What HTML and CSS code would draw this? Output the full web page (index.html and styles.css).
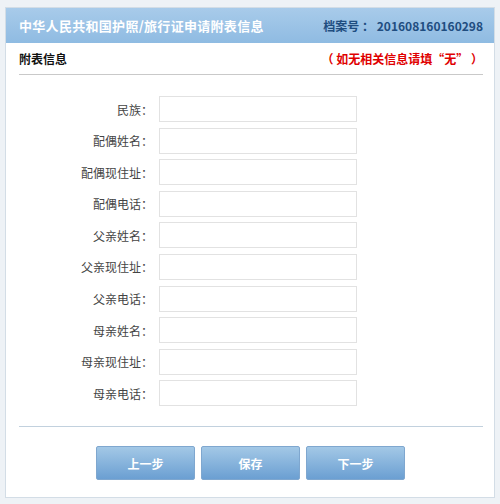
FILE: index.html
```html
<!DOCTYPE html>
<html lang="zh-CN">
<head>
  <meta charset="UTF-8" />
  <title>附表信息</title>
  <link rel="stylesheet" href="styles.css">
</head>
<body>
  <div class="panel">
    <div class="panel-head">
      <h1>中华人民共和国护照/旅行证申请附表信息</h1>
      <span class="file-no">档案号 ： 201608160160298</span>
    </div>

    <div class="panel-body">
      <div class="sub-head">
        <h2>附表信息</h2>
        <span class="note">（ 如无相关信息请填“无” ）</span>
      </div>

      <!-- 附表表单 -->
      <form class="form">
        <div class="row"><label>民族：</label><input type="text" /></div>
        <div class="row"><label>配偶姓名：</label><input type="text" /></div>
        <div class="row"><label>配偶现住址：</label><input type="text" /></div>
        <div class="row"><label>配偶电话：</label><input type="text" /></div>
        <div class="row"><label>父亲姓名：</label><input type="text" /></div>
        <div class="row"><label>父亲现住址：</label><input type="text" /></div>
        <div class="row"><label>父亲电话：</label><input type="text" /></div>
        <div class="row"><label>母亲姓名：</label><input type="text" /></div>
        <div class="row"><label>母亲现住址：</label><input type="text" /></div>
        <div class="row"><label>母亲电话：</label><input type="text" /></div>
      </form>

      <div class="actions">
        <button type="button">上一步</button>
        <button type="button">保存</button>
        <button type="button">下一步</button>
      </div>
    </div>
  </div>
</body>
</html>
```

FILE: styles.css
```css
* {
  margin: 0;
  padding: 0;
  box-sizing: border-box;
}

body {
  font-family: "Noto Sans CJK SC", "Liberation Sans", sans-serif;
  font-size: 12px;
  color: #333;
  background-color: #eef2f6;
  padding: 7px 5px 6px 5px;
}

.panel {
  background-color: #fff;
  border: 1px solid #d3dde6;
  height: 491px;
}

.panel-head {
  height: 35px;
  display: flex;
  align-items: center;
  justify-content: space-between;
  padding: 0 11px 0 13px;
  background: linear-gradient(#a8cbea, #8fbbe2);
}

.panel-head h1 {
  font-size: 13px;
  font-weight: bold;
  color: #fff;
  letter-spacing: 0.3px;
}

.file-no {
  font-size: 12px;
  font-weight: bold;
  color: #1f4d80;
}

.panel-body {
  padding: 0 11px 0 13px;
}

.sub-head {
  display: flex;
  align-items: center;
  justify-content: space-between;
  height: 32px;
  border-bottom: 1px solid #c9c9c9;
}

.sub-head h2 {
  font-size: 12px;
  font-weight: bold;
  color: #111;
}

.note {
  font-size: 12px;
  font-weight: bold;
  color: #e00000;
}

.form {
  display: flex;
  flex-direction: column;
  gap: 5.6px;
  padding: 21px 0 20px 0;
  border-bottom: 1px solid #c2d1de;
}

.row {
  display: flex;
  align-items: center;
}

.row label {
  width: 140px;
  text-align: right;
  padding-right: 6px;
  color: #444;
}

.row input {
  width: 198px;
  height: 26px;
  border: 1px solid #e2e2e2;
  background-color: #fff;
  padding: 0 5px;
  font-size: 12px;
}

.actions {
  display: flex;
  gap: 6px;
  padding: 19px 0 0 77px;
}

.actions button {
  width: 99px;
  height: 34px;
  border: 1px solid #7fa7cf;
  border-radius: 2px;
  background: linear-gradient(#a3c8e6, #6b9fd2);
  color: #fff;
  font-family: "Noto Sans CJK SC", "Liberation Sans", sans-serif;
  font-size: 12px;
  font-weight: bold;
  cursor: pointer;
}
```
